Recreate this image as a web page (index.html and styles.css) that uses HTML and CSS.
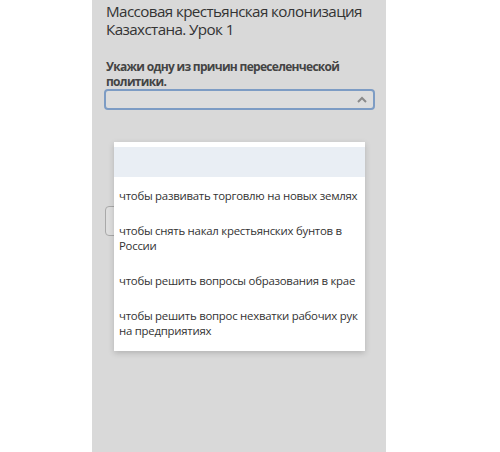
FILE: index.html
```html
<!DOCTYPE html>
<html lang="ru">
<head>
<meta charset="utf-8">
<link rel="stylesheet" href="styles.css">
</head>
<body>
<div class="panel">
  <h1 class="title">Массовая крестьянская колонизация Казахстана. Урок 1</h1>
  <p class="question">Укажи одну из причин переселенческой политики.</p>
  <div class="select">
    <svg class="chev" width="10" height="7" viewBox="0 0 10 7"><path d="M1 6 L5 2 L9 6" fill="none" stroke="#8a8a8a" stroke-width="2"/></svg>
  </div>
  <div class="check"></div>
  <ul class="menu">
    <li class="opt empty"></li>
    <li class="opt">чтобы развивать торговлю на новых землях</li>
    <li class="opt">чтобы снять накал крестьянских бунтов в России</li>
    <li class="opt">чтобы решить вопросы образования в крае</li>
    <li class="opt">чтобы решить вопрос нехватки рабочих рук на предприятиях</li>
  </ul>
</div>
</body>
</html>
```
FILE: styles.css
```css
html, body {
  margin: 0;
  padding: 0;
  background: #ffffff;
}
body {
  font-family: "Open Sans", "Noto Sans", sans-serif;
  color: #333;
}
.panel {
  position: relative;
  margin-left: 92px;
  width: 294px;
  height: 452px;
  background: #d9d9d9;
  padding: 2px 12px 0 12px;
  box-sizing: border-box;
}
.title {
  margin: 0 0 0 2px;
  font-weight: 400;
  font-size: 15.2px;
  letter-spacing: -0.6px;
  line-height: 18px;
  color: #333;
}
.question {
  margin: 21px 0 0 2px;
  font-weight: 700;
  font-size: 12px;
  letter-spacing: -0.7px;
  line-height: 15px;
  color: #444;
}
.select {
  height: 21px;
  box-sizing: border-box;
  border: 2px solid #7d9cc4;
  border-radius: 4px;
  background: #dddddd;
  display: flex;
  align-items: center;
  justify-content: flex-end;
  padding-right: 6px;
  width: 271px;
}
.chev {
  display: block;
}
.check {
  margin-top: 96px;
  height: 30px;
  width: 110px;
  box-sizing: border-box;
  border: 1px solid #a9a9a9;
  border-radius: 4px;
  background: #dedede;
  margin-left: 1px;
}
.menu {
  position: absolute;
  left: 22px;
  top: 142px;
  width: 251px;
  margin: 0;
  padding: 5px 0 4px 0;
  list-style: none;
  background: #ffffff;
  box-shadow: 0 2px 6px rgba(0,0,0,0.18);
}
.opt {
  padding: 11px 4px 9px 5px;
  font-size: 11.4px;
  letter-spacing: -0.25px;
  line-height: 15px;
  color: #333;
}
.opt.empty {
  height: 30px;
  padding: 0;
  background: #e9eef4;
}
```
